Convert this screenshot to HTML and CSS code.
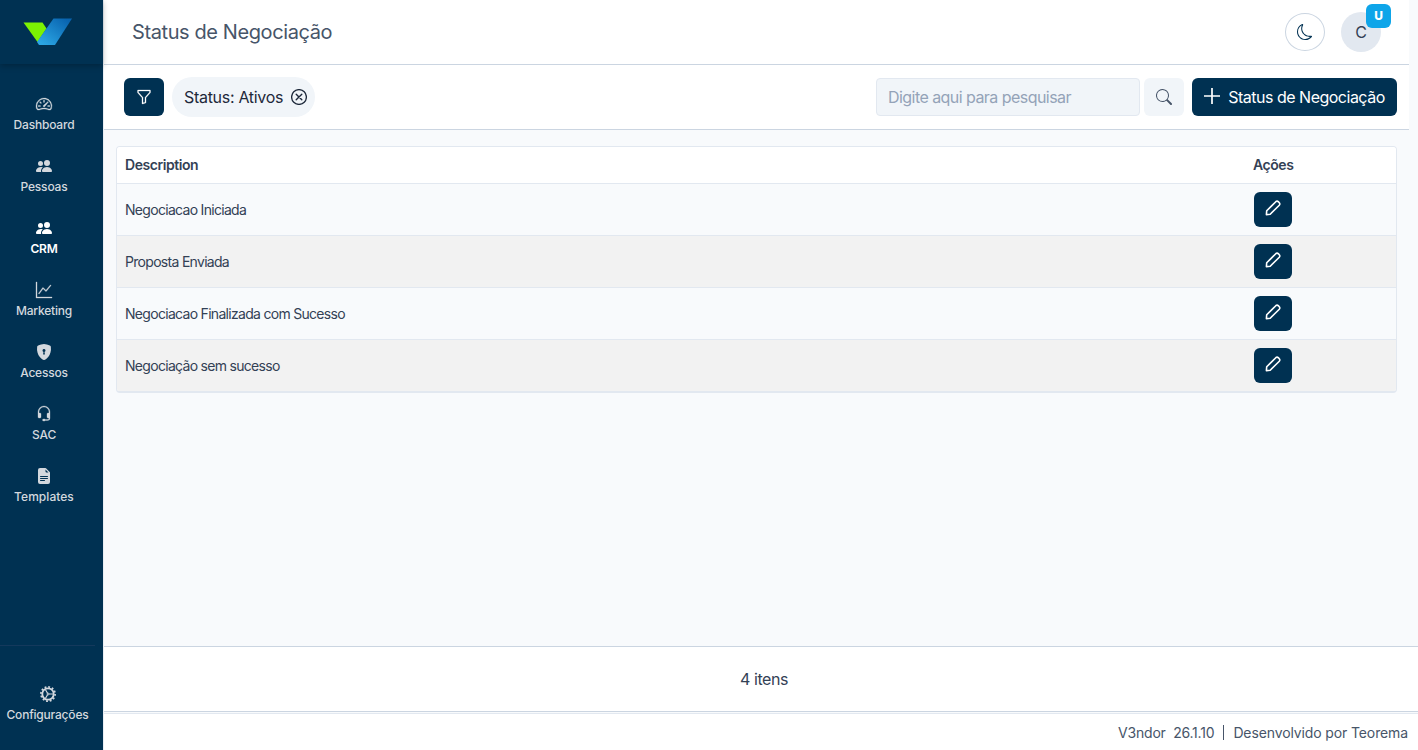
FILE: index.html
```html
<!DOCTYPE html>
<html lang="pt-BR">
<head>
    <meta charset="UTF-8">
    <meta name="viewport" content="width=device-width, initial-scale=1.0">
    <title>Status de Negociação</title>
    <link rel="stylesheet" href="styles.css">
</head>
<body>
    <svg class="symbols" aria-hidden="true">
        <symbol id="pencil" viewBox="0 0 16 16">
            <path d="M1.4 14.6 L1.7 10.8 L10.8 1.7 Q12.1 .6 13.500 1.900 L14.100 2.500 Q15.400 3.900 14.300 5.200 L5.200 14.300 Z" fill="none" stroke="currentColor" stroke-width="1.600" stroke-linejoin="round"/>
        </symbol>
        <symbol id="people" viewBox="0 0 16 16">
            <path d="M7 14s-1 0-1-1 1-4 5-4 5 3 5 4-1 1-1 1zm4-6a3 3 0 1 0 0-6 3 3 0 0 0 0 6m-5.784 6A2.24 2.24 0 0 1 5 13c0-1.355.68-2.75 1.936-3.72A6.3 6.3 0 0 0 5 9c-4 0-5 3-5 4s1 1 1 1zM4.500 8a2.500 2.500 0 1 0 0-5 2.500 2.500 0 0 0 0 5"/>
        </symbol>
    </svg>

    <aside class="sidebar">
        <div class="brand">
            <svg width="50" height="28" viewBox="0 0 50 28">
                <defs>
                    <linearGradient id="blue" x1="0" y1="1" x2="1" y2="0">
                        <stop offset="0.1" stop-color="#2ba6e4"/>
                        <stop offset="0.9" stop-color="#0964b0"/>
                    </linearGradient>
                </defs>
                <path d="M0.500 4.500h19l4 6L14.500 24z" fill="#7cf203"/>
                <path d="M30.500 0.500h18.500L32 27H16l-2-3z" fill="url(#blue)"/>
            </svg>
        </div>
        <nav class="menu">
            <a class="menu-item">
                <svg class="icon bold" viewBox="0 0 16 16"><path d="M8 4a.5.5 0 0 1 .5.5V6a.5.5 0 0 1-1 0V4.500A.5.5 0 0 1 8 4M3.732 5.732a.5.5 0 0 1 .707 0l.915.914a.5.5 0 1 1-.708.708l-.914-.915a.5.5 0 0 1 0-.707M2 10a.5.5 0 0 1 .5-.5h1.586a.5.5 0 0 1 0 1H2.500A.5.5 0 0 1 2 10m9.500 0a.5.5 0 0 1 .5-.5h1.500a.5.5 0 0 1 0 1H12a.5.5 0 0 1-.5-.5m.754-4.246a.39.39 0 0 0-.527-.02L7.547 9.310a.91.91 0 1 0 1.302 1.258l3.434-4.297a.39.39 0 0 0-.029-.518z"/><path fill-rule="evenodd" d="M0 10a8 8 0 1 1 15.547 2.661c-.442 1.253-1.845 1.602-2.932 1.250C11.309 13.488 9.475 13 8 13c-1.474 0-3.310.488-4.615.911-1.087.352-2.490.003-2.932-1.250A8 8 0 0 1 0 10m8-7a7 7 0 0 0-6.603 9.329c.203.575.923.876 1.680.63C4.397 12.533 6.358 12 8 12s3.604.532 4.923.96c.757.245 1.477-.056 1.680-.631A7 7 0 0 0 8 3"/></svg>
                <span>Dashboard</span>
            </a>
            <a class="menu-item">
                <svg class="icon"><use href="#people"/></svg>
                <span>Pessoas</span>
            </a>
            <a class="menu-item active">
                <svg class="icon"><use href="#people"/></svg>
                <span>CRM</span>
            </a>
            <a class="menu-item">
                <svg class="icon bold" viewBox="0 0 16 16"><path d="M0 0h1v15h15v1H0zm14.817 3.113a.5.5 0 0 1 .07.704l-4.500 5.500a.5.5 0 0 1-.74.037L7.060 6.767l-3.656 5.027a.5.5 0 0 1-.808-.588l4-5.500a.5.5 0 0 1 .758-.06l2.609 2.610 4.150-5.073a.5.5 0 0 1 .704-.07"/></svg>
                <span>Marketing</span>
            </a>
            <a class="menu-item">
                <svg class="icon" viewBox="0 0 16 16"><path fill-rule="evenodd" d="M8 0c-.69 0-1.843.265-2.928.56-1.110.3-2.229.655-2.887.87a1.540 1.540 0 0 0-1.044 1.262c-.596 4.477.787 7.795 2.465 9.990a11.800 11.800 0 0 0 2.517 2.453c.386.273.744.482 1.048.625.28.132.581.24.829.24s.548-.108.829-.24a7 7 0 0 0 1.048-.625 11.800 11.800 0 0 0 2.517-2.453c1.678-2.195 3.061-5.513 2.465-9.990a1.540 1.540 0 0 0-1.044-1.263 63 63 0 0 0-2.887-.87C9.843.266 8.690 0 8 0m0 5a1.500 1.500 0 0 1 .5 2.915l.385 1.990a.5.5 0 0 1-.491.595h-.788a.5.5 0 0 1-.49-.595l.384-1.990A1.500 1.500 0 0 1 8 5"/></svg>
                <span>Acessos</span>
            </a>
            <a class="menu-item">
                <svg class="icon bold" viewBox="0 0 16 16"><path d="M8 1a5 5 0 0 0-5 5v1h1a1 1 0 0 1 1 1v3a1 1 0 0 1-1 1H3a1 1 0 0 1-1-1V6a6 6 0 1 1 12 0v6a2.500 2.500 0 0 1-2.500 2.500H9.366a1 1 0 0 1-.866.5h-1a1 1 0 1 1 0-2h1a1 1 0 0 1 .866.5H11.500A1.500 1.500 0 0 0 13 12h-1a1 1 0 0 1-1-1V8a1 1 0 0 1 1-1h1V6a5 5 0 0 0-5-5"/></svg>
                <span>SAC</span>
            </a>
            <a class="menu-item">
                <svg class="icon" viewBox="0 0 16 16"><path d="M9.293 0H4a2 2 0 0 0-2 2v12a2 2 0 0 0 2 2h8a2 2 0 0 0 2-2V4.707A1 1 0 0 0 13.707 4L10 .293A1 1 0 0 0 9.293 0M9.500 3.500v-2l3 3h-2a1 1 0 0 1-1-1M4.500 9a.5.5 0 0 1 0-1h7a.5.5 0 0 1 0 1zM4 10.500a.5.5 0 0 1 .5-.5h7a.5.5 0 0 1 0 1h-7a.5.5 0 0 1-.5-.5m.5 2.500a.5.5 0 0 1 0-1h4a.5.5 0 0 1 0 1z"/></svg>
                <span class="wide">Templates</span>
            </a>
        </nav>
        <div class="settings">
            <a class="menu-item">
                <svg class="icon" viewBox="0 0 16 16" fill="none" stroke="currentColor">
                    <circle cx="8" cy="8" r="5.700" stroke-width="1.800"/>
                    <circle cx="8" cy="8" r="7.100" stroke-width="1.700" stroke-dasharray="1.860 1.858"/>
                    <path d="M8.500 8H13M7.700 7.500L5.500 3.800M7.700 8.500L5.500 12.200" stroke-width="1.200"/>
                    <circle cx="8" cy="8" r="1" stroke-width=".8"/>
                </svg>
                <span>Configurações</span>
            </a>
        </div>
    </aside>

    <main class="content">
        <header class="topbar">
            <h1>Status de Negociação</h1>
            <button class="theme">
                <svg class="icon" viewBox="0 0 16 16"><path fill-rule="evenodd" d="M6 .278a.77.77 0 0 1 .08.858 7.200 7.200 0 0 0-.878 3.460c0 4.021 3.278 7.277 7.318 7.277q.792-.001 1.533-.16a.79.79 0 0 1 .81.316.73.73 0 0 1-.031.893A8.350 8.350 0 0 1 8.344 16C3.734 16 0 12.286 0 7.710 0 4.266 2.114 1.312 5.124.06A.75.75 0 0 1 6 .278M4.858 1.311A7.270 7.270 0 0 0 1.025 7.710c0 4.020 3.279 7.276 7.319 7.276a7.320 7.320 0 0 0 5.205-2.162q-.506.063-1.029.063c-4.610 0-8.343-3.714-8.343-8.290 0-1.167.242-2.278.681-3.286"/></svg>
            </button>
            <div class="avatar">C<span class="badge">U</span></div>
        </header>

        <div class="toolbar">
            <button class="btn btn-filter">
                <svg class="icon bold" viewBox="0 0 16 16"><path fill-rule="evenodd" d="M1.500 1.500A.5.5 0 0 1 2 1h12a.5.5 0 0 1 .5.5v2a.5.5 0 0 1-.128.334L10 8.692V13.500a.5.5 0 0 1-.342.474l-3 1A.5.5 0 0 1 6 14.500V8.692L1.628 3.834A.5.5 0 0 1 1.500 3.500zm1 .5v1.308l4.372 4.858A.5.5 0 0 1 7 8.500v5.306l2-.666V8.500a.5.5 0 0 1 .128-.334L13.500 3.308V2z"/></svg>
            </button>
            <div class="chip">
                <span>Status: Ativos</span>
                <svg class="icon" viewBox="0 0 16 16" fill="none" stroke="currentColor"><circle cx="8" cy="8" r="7.400" stroke-width="1.300"/><path d="M5.200 5.200l5.600 5.600M10.800 5.200l-5.600 5.600" stroke-width="1.400" stroke-linecap="round"/></svg>
            </div>
            <input class="search" type="text" placeholder="Digite aqui para pesquisar">
            <button class="btn-search">
                <svg class="icon" viewBox="0 0 16 16"><path fill-rule="evenodd" d="M11.742 10.344a6.500 6.500 0 1 0-1.397 1.398h-.001q.044.06.098.115l3.850 3.850a1 1 0 0 0 1.415-1.414l-3.850-3.850a1 1 0 0 0-.115-.1zM12 6.500a5.500 5.500 0 1 1-11 0 5.500 5.500 0 0 1 11 0"/></svg>
            </button>
            <button class="btn btn-new">
                <svg class="icon plus" viewBox="0 0 16 16" fill="none" stroke="currentColor" stroke-width="1.700"><path d="M8 0v16M0 8h16"/></svg>
                <span>Status de Negociação</span>
            </button>
        </div>

        <section class="list">
            <div class="table">
                <div class="row head">
                    <span>Description</span>
                    <span>Ações</span>
                </div>
                <div class="row">
                    <span>Negociacao Iniciada</span>
                    <button class="btn btn-edit"><svg class="icon"><use href="#pencil"/></svg></button>
                </div>
                <div class="row">
                    <span>Proposta Enviada</span>
                    <button class="btn btn-edit"><svg class="icon"><use href="#pencil"/></svg></button>
                </div>
                <div class="row">
                    <span>Negociacao Finalizada com Sucesso</span>
                    <button class="btn btn-edit"><svg class="icon"><use href="#pencil"/></svg></button>
                </div>
                <div class="row">
                    <span>Negociação sem sucesso</span>
                    <button class="btn btn-edit"><svg class="icon"><use href="#pencil"/></svg></button>
                </div>
            </div>
        </section>

        <div class="count"><span>4 itens</span></div>
        <footer class="footer">
            <span class="version">V3ndor&nbsp; 26.1.10</span>
            <span class="sep"></span>
            <span class="credit">Desenvolvido por Teorema</span>
        </footer>
    </main>
</body>
</html>
```
FILE: styles.css
```css
* {
    box-sizing: border-box;
}
body {
    margin: 0;
    display: flex;
    height: 750px;
    overflow: hidden;
    background: #f8fafc;
    color: #334155;
    font-family: Inter, "Liberation Sans", sans-serif;
    font-size: 16px;
}
.symbols {
    position: absolute;
    width: 0;
    height: 0;
}
button {
    border: none;
    padding: 0;
    font: inherit;
}
.icon {
    display: block;
    flex: none;
    width: 16px;
    height: 16px;
    fill: currentColor;
}
.icon[fill="none"] {
    fill: none;
}
.icon.bold {
    stroke: currentColor;
    stroke-width: 0.3px;
    overflow: visible;
}

/* Sidebar */
.sidebar {
    display: flex;
    flex-direction: column;
    flex: none;
    width: 103px;
    background: #003152;
    z-index: 1;
}
.brand {
    height: 64px;
    padding: 18px 0 0 23px;
    box-shadow: 0 2px 6px rgba(0, 0, 0, 0.25);
}
.brand svg {
    display: block;
}
.menu {
    flex: 1;
    padding-top: 32px;
}
.menu-item {
    display: flex;
    flex-direction: column;
    align-items: center;
    gap: 5px;
    width: 88px;
    height: 62px;
    color: #d3d8de;
    font-size: 12px;
    font-weight: 500;
    letter-spacing: -0.2px;
    line-height: 16px;
    white-space: nowrap;
}
.menu-item .wide {
    letter-spacing: 0.05px;
}
.menu-item.active {
    color: #fff;
    font-weight: 600;
}
.settings {
    width: 95px;
    height: 105px;
    padding-top: 40px;
    border-top: 1px solid #14395c;
}
.settings .menu-item {
    width: 95px;
}

/* Header */
.content {
    display: flex;
    flex-direction: column;
    flex: 1;
    min-width: 0;
    border-left: 1px solid #e8edf3;
}
.topbar {
    display: flex;
    align-items: center;
    height: 65px;
    margin-right: 9px;
    padding: 0 28px;
    background: #fff;
    border-bottom: 1px solid #cbd5e1;
}
h1 {
    flex: 1;
    margin: 0;
    color: #475569;
    font-size: 20px;
    font-weight: 400;
    letter-spacing: -0.4px;
}
.theme {
    display: grid;
    place-items: center;
    width: 40px;
    height: 38px;
    margin-right: 16px;
    background: #fff;
    color: #003152;
    border: 1px solid #cbd5e1;
    border-radius: 50%;
}
.avatar {
    position: relative;
    width: 40px;
    height: 40px;
    border-radius: 50%;
    background: #e2e8f0;
    line-height: 40px;
    text-align: center;
}
.badge {
    position: absolute;
    top: -8px;
    left: 25px;
    width: 25px;
    height: 24px;
    border-radius: 6px;
    background: #0ea5e9;
    color: #fff;
    font-size: 12px;
    font-weight: 800;
    line-height: 23px;
}

/* Filters */
.toolbar {
    display: flex;
    align-items: center;
    height: 65px;
    margin-right: 9px;
    padding: 0 12px 0 20px;
    background: #fff;
    border-bottom: 1px solid #cbd5e1;
}
.btn {
    display: flex;
    align-items: center;
    justify-content: center;
    background: #003152;
    color: #fff;
    border-radius: 6px;
}
.btn-filter {
    width: 40px;
    height: 38px;
    margin-right: 8px;
}
.chip {
    display: flex;
    align-items: center;
    justify-content: space-between;
    width: 143px;
    height: 40px;
    padding: 0 8px 0 12px;
    border-radius: 20px;
    background: #f1f5f9;
    color: #1e293b;
    letter-spacing: -0.3px;
    white-space: nowrap;
}
.search {
    width: 264px;
    height: 38px;
    margin-left: auto;
    padding: 0 11px;
    border: 1px solid #e2e8f0;
    border-radius: 4px;
    background: #f1f5f9;
    font: inherit;
    letter-spacing: -0.55px;
}
.search::placeholder {
    color: #94a3b8;
}
.btn-search {
    display: grid;
    place-items: center;
    width: 40px;
    height: 38px;
    margin: 0 8px 0 4px;
    border-radius: 6px;
    background: #f1f5f9;
    color: #475569;
}
.btn-new {
    gap: 8px;
    width: 205px;
    height: 38px;
    letter-spacing: -0.5px;
    white-space: nowrap;
}
.plus {
    margin-bottom: 2px;
}

/* Table */
.list {
    flex: 1;
    padding: 16px 21px 0 12px;
}
.table {
    border: 1px solid #e2e8f0;
    border-bottom-width: 2px;
    border-radius: 4px;
    overflow: hidden;
    font-size: 14px;
    letter-spacing: -0.7px;
}
.row {
    display: grid;
    grid-template-columns: 1129px 1fr;
    align-items: center;
    height: 52px;
    padding: 0 8px;
    border-top: 1px solid #e2e8f0;
}
.row:nth-child(odd) {
    background: #f2f2f2;
}
.row.head {
    height: 36px;
    padding-bottom: 2px;
    border-top: none;
    background: #fff;
    font-weight: 600;
    letter-spacing: -0.45px;
}
.head span:last-child {
    margin-left: -1px;
}
.btn-edit {
    width: 38px;
    height: 35px;
    padding-bottom: 3px;
}

/* Footer */
.count {
    display: flex;
    align-items: center;
    justify-content: center;
    height: 66px;
    padding-left: 6px;
    background: #fff;
    border-top: 1px solid #cbd5e1;
    border-bottom: 1px solid #cbd5e1;
    letter-spacing: -0.4px;
}
.footer {
    display: flex;
    align-items: center;
    justify-content: flex-end;
    height: 37px;
    margin-top: 1px;
    padding-right: 10px;
    padding-top: 1px;
    background: #fff;
    border-top: 1px solid #e2e8f0;
    color: #475569;
    font-size: 14px;
    white-space: nowrap;
}
.version {
    letter-spacing: -0.2px;
}
.credit {
    letter-spacing: -0.12px;
}
.sep {
    width: 1px;
    height: 15px;
    margin: 0 9px;
    background: #475569;
}
```
